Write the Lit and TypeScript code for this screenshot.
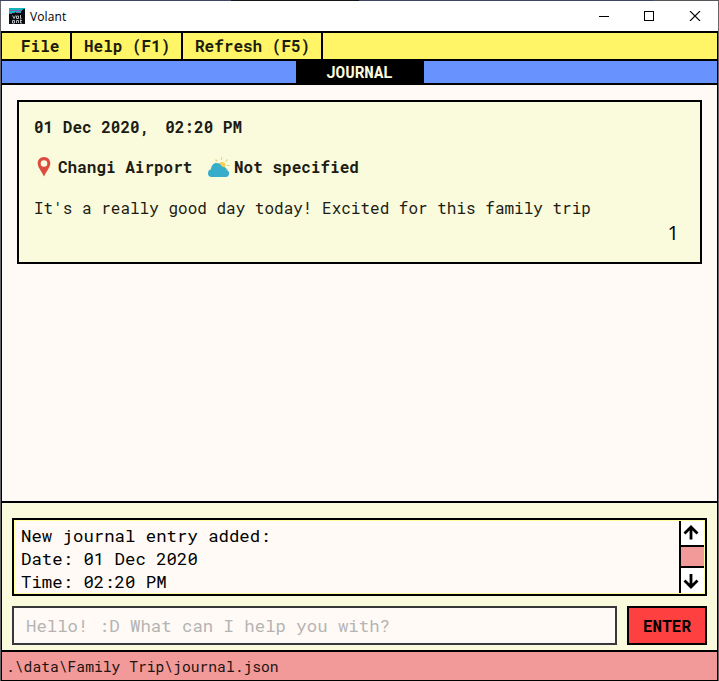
import { LitElement, html, css, svg } from "lit";
import { customElement, property } from "lit/decorators.js";

const logo = svg`
  <rect width="16" height="16" fill="#0b0d10"/>
  <rect width="16" height="2" fill="#12b5b5"/>
  <path d="M0 2h14v1H0z" fill="#8a5cc0"/>
  <path d="M0 3h12v2H8V4H6v1H0z" fill="#16b9b4"/>
  <path d="M0 5h3v1H0zM7 4h4v1H7z" fill="#8a5cc0"/>
  <path d="M14 1h2v3h-3V2h1zM12 3h2v2h-2zM4 5h3v2H4z" fill="#0b0d10"/>
  <path d="M3.500 7.500l1.500 3 1.500-3M7.500 8h2v2.500h-2zM11.500 7v3.500h1M3.500 12.500h2v2.500h-2zM7.500 15v-2.500h2V15M11.500 11.500V15h1.500M11 12.500h2" fill="none" stroke="#c9cdd0" stroke-width=".9"/>`;

@customElement("journal-card")
export class JournalCard extends LitElement {
  @property() date = "";
  @property() time = "";
  @property() place = "";
  @property() weather = "";
  @property() text = "";
  @property({ type: Number }) index = 1;

  static styles = css`
    :host {
      display: block;
      box-sizing: border-box;
      height: 164px;
      border: 2px solid #000;
      background: #fafbdc;
      padding: 14px 21px 0 15px;
      color: #1c1c14;
      font-size: 16px;
    }
    .row {
      display: flex;
      align-items: center;
      height: 21px;
      white-space: pre;
    }
    .bold { font-weight: 700; }
    .where { margin-top: 19px; }
    .time { margin-left: 16px; }
    .pin { margin: 0 5px 0 1px; }
    .cloud { margin: 0 4px 0 15.600px; }
    .body { margin-top: 20px; }
    .index {
      height: 24px;
      margin-top: 3px;
      line-height: 24px;
      text-align: right;
      color: #000;
      font-family: "Open Sans", "Noto Sans", sans-serif;
      font-size: 20px;
    }
    svg { display: block; flex: none; }
  `;

  render() {
    return html`
      <div class="row bold"><span>${this.date},</span><span class="time">${this.time}</span></div>
      <div class="row bold where">
        <svg class="pin" width="18" height="20" viewBox="0 0 18 20">
          <path fill="#dd4b3e" fill-rule="evenodd" d="M9 0C5.300 0 2.700 2.800 2.700 6.200c0 4.300 4 8 6.300 13.300 2.300-5.300 6.300-9 6.300-13.300C15.300 2.800 12.700 0 9 0zm0 3.200a3.300 3.300 0 1 1 0 6.600 3.300 3.300 0 0 1 0-6.600z"/>
        </svg>
        <span>${this.place}</span>
        <svg class="cloud" width="22" height="20" viewBox="0 0 22 20">
          <path stroke="#efd27a" stroke-width="1.100" fill="none" d="M13.500 0v3M7.500 2.500l2 2M19.500 2.500l-2 2M22 8.500h-3M18.500 12l1.500 1"/>
          <circle cx="14" cy="8.500" r="3.500" fill="#f7cf52"/>
          <path fill="#35adcb" d="M3.500 20C1.300 20 0 18.300 0 16.200c0-2.200 1.200-3.600 3-3.900C3.200 8.500 5.500 6 8.500 6c2.800 0 4.600 1.500 5.500 3.700 2.600-.2 4.800 1.200 4.900 3.600 1.500.4 2.200 1.600 2.200 3 0 2.200-1.200 3.700-3.400 3.700z"/>
        </svg>
        <span>${this.weather}</span>
      </div>
      <div class="row body">${this.text}</div>
      <div class="index">${this.index}</div>
    `;
  }
}

@customElement("app-root")
export class AppRoot extends LitElement {
  static styles = css`
    :host {
      display: block;
      box-sizing: border-box;
      width: 719px;
      height: 681px;
      overflow: hidden;
      background: #66666a;
      font-family: "Roboto Mono", "DejaVu Sans Mono", monospace;
      color: #000;
    }
    * { box-sizing: border-box; }
    svg { display: block; }
    .edge {
      height: 1px;
      background: linear-gradient(90deg, #3d4668 231px, #141414 231px 359px, #3d4668 359px 653px, #55555a 653px);
    }
    .window { display: flex; flex-direction: column; height: 680px; margin: 0 1px; }
    .titlebar {
      display: flex;
      align-items: center;
      height: 30px;
      padding: 0 17px 0 8px;
      background: #fff;
      font-family: "Open Sans", "Noto Sans", sans-serif;
      font-size: 12px;
      flex: none;
    }
    .name { margin-left: 5px; flex: 1; padding-top: 1px; letter-spacing: 0.1px; }
    .controls { display: flex; gap: 35px; }
    .client {
      flex: 1;
      display: flex;
      flex-direction: column;
      border: 1px solid #000;
      border-top-width: 2px;
      min-height: 0;
    }
    .menu {
      display: flex;
      height: 28px;
      background: #fff566;
      border-bottom: 2px solid #000;
      font-size: 16px;
      font-weight: 700;
      line-height: 26px;
      color: #1c1c0c;
      flex: none;
    }
    .item { padding: 0 0 0 12px; border-right: 2px solid #000; white-space: pre; }
    .item:first-child { padding-left: 19px; width: 70px; }
    .item:nth-child(2) { width: 111px; }
    .item:nth-child(3) { width: 140px; }
    .tabs {
      display: flex;
      justify-content: center;
      height: 24px;
      background: #6893ff;
      border-bottom: 2px solid #000;
      flex: none;
    }
    .tab {
      width: 128px;
      background: #000;
      color: #fafbdc;
      font-weight: 700;
      font-size: 16px;
      letter-spacing: -0.05px;
      line-height: 22px;
      text-align: center;
    }
    .page { flex: 1; padding: 15px; min-height: 0; background: #fffaf5; }
    .console {
      height: 149px;
      flex: none;
      border-top: 2px solid #000;
      background: #fafbdc;
      padding: 15px 10px 5px;
      display: flex;
      flex-direction: column;
      gap: 10px;
    }
    .result {
      display: flex;
      height: 78px;
      border: 2px solid #000;
      background: #fffaf5;
      outline: 1px solid #ffff9c;
      outline-offset: -3px;
    }
    .log {
      flex: 1;
      padding: 4px 0 0 7px;
      font-size: 17.33px;
      line-height: 23px;
      white-space: pre;
    }
    .scroll {
      width: 25px;
      margin: 0 1px 1px 0;
      display: flex;
      flex-direction: column;
      border-left: 2px solid #000;
      background: #fff;
    }
    .arrow { height: 25px; display: flex; justify-content: center; align-items: center; padding-right: 3px; }
    .thumb { height: 24px; background: #f29999; border: 2px solid #000; border-width: 2px 0; }
    .entry { display: flex; gap: 10px; height: 39px; }
    .field {
      flex: 1;
      border: 2px solid #38383a;
      background: #fffaf5;
      color: #b4b4b4;
      font-size: 17.33px;
      line-height: 35px;
      padding-left: 12px;
      white-space: pre;
    }
    .enter {
      width: 80px;
      border: 2px solid #000;
      background: #ff4040;
      font-weight: 700;
      font-size: 16px;
      line-height: 36px;
      text-align: center;
    }
    .status {
      height: 30px;
      flex: none;
      border-top: 2px solid #000;
      background: #f29999;
      color: #20140f;
      font-size: 14.67px;
      line-height: 30px;
      padding-left: 4px;
      white-space: pre;
    }
  `;

  render() {
    return html`
      <div class="edge"></div>
      <div class="window">
        <div class="titlebar">
          <svg width="16" height="16" viewBox="0 0 16 16">${logo}</svg>
          <span class="name">Volant</span>
          <div class="controls">
            <svg width="10" height="10"><path d="M0 5.500h10" stroke="#000"/></svg>
            <svg width="10" height="10"><rect x=".5" y=".5" width="9" height="9" fill="none" stroke="#000"/></svg>
            <svg width="12" height="10"><path d="M1 0l10 10M11 0L1 10" stroke="#000" stroke-width="1.100"/></svg>
          </div>
        </div>
        <div class="client">
          <div class="menu">
            ${["File", "Help (F1)", "Refresh (F5)"].map((m) => html`<div class="item">${m}</div>`)}
          </div>
          <div class="tabs"><div class="tab">JOURNAL</div></div>
          <div class="page">
            <journal-card
              date="01 Dec 2020"
              time="02:20 PM"
              place="Changi Airport"
              weather="Not specified"
              text="It's a really good day today! Excited for this family trip"
              index="1"
            ></journal-card>
          </div>
          <div class="console">
            <div class="result">
              <div class="log">${["New journal entry added:", "Date: 01 Dec 2020", "Time: 02:20 PM"].map((l) => html`<div>${l}</div>`)}</div>
              <div class="scroll">
                <div class="arrow"><svg width="16" height="16" viewBox="0 0 16 16"><path d="M8 15.500V3M1.500 9.500L8 3l6.500 6.500" fill="none" stroke="#000" stroke-width="2.800"/></svg></div>
                <div class="thumb"></div>
                <div class="arrow"><svg width="16" height="16" viewBox="0 0 16 16"><path d="M8 1v13M1.500 7.500L8 14l6.500-6.500" fill="none" stroke="#000" stroke-width="2.800"/></svg></div>
              </div>
            </div>
            <div class="entry">
              <div class="field">Hello! :D What can I help you with?</div>
              <div class="enter">ENTER</div>
            </div>
          </div>
          <div class="status">.\\data\\Family Trip\\journal.json</div>
        </div>
      </div>
    `;
  }
}
